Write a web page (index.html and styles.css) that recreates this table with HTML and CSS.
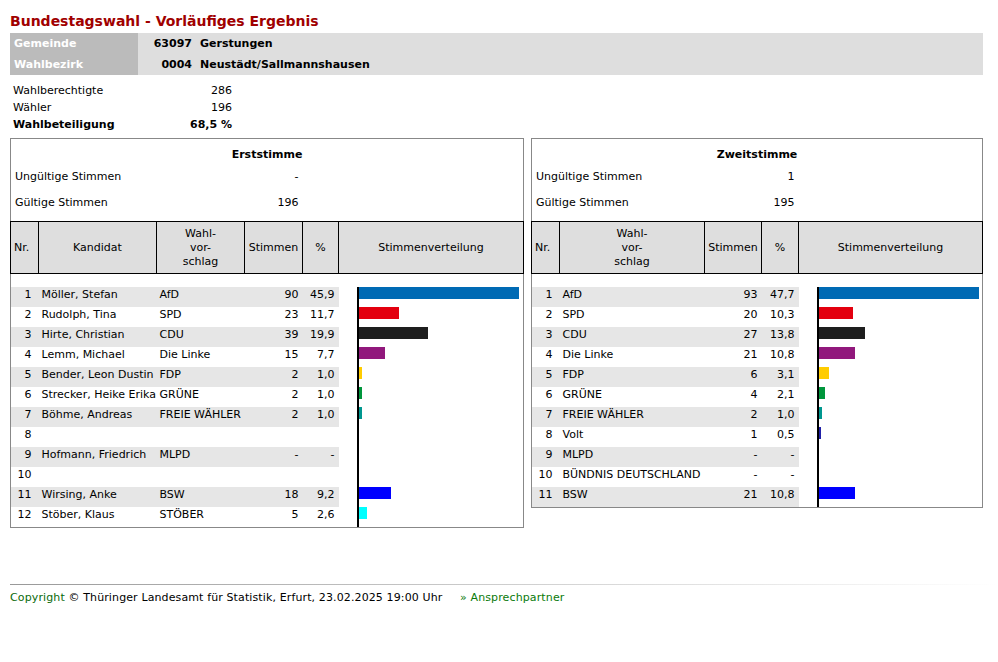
FILE: index.html
```html
<!DOCTYPE html>
<html lang="de">
<head>
<meta charset="utf-8">
<title>Bundestagswahl - Vorläufiges Ergebnis</title>
<link rel="stylesheet" href="styles.css">
</head>
<body>
<div class="page">
  <h1 class="title">Bundestagswahl - Vorläufiges Ergebnis</h1>

  <table class="info">
    <tr><th class="lbl">Gemeinde</th><td class="num">63097</td><td class="name">Gerstungen</td></tr>
    <tr><th class="lbl">Wahlbezirk</th><td class="num">0004</td><td class="name">Neustädt/Sallmannshausen</td></tr>
  </table>

  <table class="stats">
    <tr><td class="sl">Wahlberechtigte</td><td class="sv">286</td></tr>
    <tr><td class="sl">Wähler</td><td class="sv">196</td></tr>
    <tr class="strong"><td class="sl">Wahlbeteiligung</td><td class="sv">68,5 %</td></tr>
  </table>

  <div class="boxes">
    <table class="res res-erst">
      <colgroup>
        <col class="w-nr"><col class="w-kand"><col class="w-wv"><col class="w-st"><col class="w-pc"><col class="w-sv">
      </colgroup>
      <tr class="cap"><td colspan="6">Erststimme</td></tr>
      <tr class="sum"><td colspan="3" class="sum-l">Ungültige Stimmen</td><td class="r">-</td><td colspan="2"></td></tr>
      <tr class="sum sum-last"><td colspan="3" class="sum-l">Gültige Stimmen</td><td class="r">196</td><td colspan="2"></td></tr>
      <tr class="head">
        <th class="h-nr">Nr.</th>
        <th>Kandidat</th>
        <th>Wahl-<br>vor-<br>schlag</th>
        <th>Stimmen</th>
        <th>%</th>
        <th>Stimmenverteilung</th>
      </tr>
      <tr class="gap"><td colspan="6"></td></tr>
      <tr class="row odd"><td class="nr">1</td><td class="txt">Möller, Stefan</td><td class="txt">AfD</td><td class="r">90</td><td class="r">45,9</td><td class="bar"><div class="axis"><div class="b c-afd" style="width:160px"></div></div></td></tr>
      <tr class="row"><td class="nr">2</td><td class="txt">Rudolph, Tina</td><td class="txt">SPD</td><td class="r">23</td><td class="r">11,7</td><td class="bar"><div class="axis"><div class="b c-spd" style="width:40px"></div></div></td></tr>
      <tr class="row odd"><td class="nr">3</td><td class="txt">Hirte, Christian</td><td class="txt">CDU</td><td class="r">39</td><td class="r">19,9</td><td class="bar"><div class="axis"><div class="b c-cdu" style="width:69px"></div></div></td></tr>
      <tr class="row"><td class="nr">4</td><td class="txt">Lemm, Michael</td><td class="txt">Die Linke</td><td class="r">15</td><td class="r">7,7</td><td class="bar"><div class="axis"><div class="b c-linke" style="width:26px"></div></div></td></tr>
      <tr class="row odd"><td class="nr">5</td><td class="txt">Bender, Leon Dustin</td><td class="txt">FDP</td><td class="r">2</td><td class="r">1,0</td><td class="bar"><div class="axis"><div class="b c-fdp" style="width:3px"></div></div></td></tr>
      <tr class="row"><td class="nr">6</td><td class="txt">Strecker, Heike Erika</td><td class="txt">GRÜNE</td><td class="r">2</td><td class="r">1,0</td><td class="bar"><div class="axis"><div class="b c-gruene" style="width:3px"></div></div></td></tr>
      <tr class="row odd"><td class="nr">7</td><td class="txt">Böhme, Andreas</td><td class="txt">FREIE WÄHLER</td><td class="r">2</td><td class="r">1,0</td><td class="bar"><div class="axis"><div class="b c-fw" style="width:3px"></div></div></td></tr>
      <tr class="row"><td class="nr">8</td><td class="txt"></td><td class="txt"></td><td class="r"></td><td class="r"></td><td class="bar"><div class="axis"></div></td></tr>
      <tr class="row odd"><td class="nr">9</td><td class="txt">Hofmann, Friedrich</td><td class="txt">MLPD</td><td class="r">-</td><td class="r">-</td><td class="bar"><div class="axis"></div></td></tr>
      <tr class="row"><td class="nr">10</td><td class="txt"></td><td class="txt"></td><td class="r"></td><td class="r"></td><td class="bar"><div class="axis"></div></td></tr>
      <tr class="row odd"><td class="nr">11</td><td class="txt">Wirsing, Anke</td><td class="txt">BSW</td><td class="r">18</td><td class="r">9,2</td><td class="bar"><div class="axis"><div class="b c-bsw" style="width:32px"></div></div></td></tr>
      <tr class="row"><td class="nr">12</td><td class="txt">Stöber, Klaus</td><td class="txt">STÖBER</td><td class="r">5</td><td class="r">2,6</td><td class="bar"><div class="axis"><div class="b c-stoeber" style="width:8px"></div></div></td></tr>
    </table>

    <table class="res res-zweit">
      <colgroup>
        <col class="w-nr"><col class="w-wv2"><col class="w-st2"><col class="w-pc2"><col class="w-sv2">
      </colgroup>
      <tr class="cap"><td colspan="5">Zweitstimme</td></tr>
      <tr class="sum"><td colspan="3" class="sum-l">Ungültige Stimmen</td><td class="r">1</td><td></td></tr>
      <tr class="sum sum-last"><td colspan="3" class="sum-l">Gültige Stimmen</td><td class="r">195</td><td></td></tr>
      <tr class="head">
        <th class="h-nr">Nr.</th>
        <th>Wahl-<br>vor-<br>schlag</th>
        <th>Stimmen</th>
        <th>%</th>
        <th>Stimmenverteilung</th>
      </tr>
      <tr class="gap"><td colspan="5"></td></tr>
      <tr class="row odd"><td class="nr">1</td><td class="txt">AfD</td><td class="r">93</td><td class="r">47,7</td><td class="bar"><div class="axis"><div class="b c-afd" style="width:160px"></div></div></td></tr>
      <tr class="row"><td class="nr">2</td><td class="txt">SPD</td><td class="r">20</td><td class="r">10,3</td><td class="bar"><div class="axis"><div class="b c-spd" style="width:34px"></div></div></td></tr>
      <tr class="row odd"><td class="nr">3</td><td class="txt">CDU</td><td class="r">27</td><td class="r">13,8</td><td class="bar"><div class="axis"><div class="b c-cdu" style="width:46px"></div></div></td></tr>
      <tr class="row"><td class="nr">4</td><td class="txt">Die Linke</td><td class="r">21</td><td class="r">10,8</td><td class="bar"><div class="axis"><div class="b c-linke" style="width:36px"></div></div></td></tr>
      <tr class="row odd"><td class="nr">5</td><td class="txt">FDP</td><td class="r">6</td><td class="r">3,1</td><td class="bar"><div class="axis"><div class="b c-fdp" style="width:10px"></div></div></td></tr>
      <tr class="row"><td class="nr">6</td><td class="txt">GRÜNE</td><td class="r">4</td><td class="r">2,1</td><td class="bar"><div class="axis"><div class="b c-gruene" style="width:6px"></div></div></td></tr>
      <tr class="row odd"><td class="nr">7</td><td class="txt">FREIE WÄHLER</td><td class="r">2</td><td class="r">1,0</td><td class="bar"><div class="axis"><div class="b c-fw" style="width:3px"></div></div></td></tr>
      <tr class="row"><td class="nr">8</td><td class="txt">Volt</td><td class="r">1</td><td class="r">0,5</td><td class="bar"><div class="axis"><div class="b c-volt" style="width:2px"></div></div></td></tr>
      <tr class="row odd"><td class="nr">9</td><td class="txt">MLPD</td><td class="r">-</td><td class="r">-</td><td class="bar"><div class="axis"></div></td></tr>
      <tr class="row"><td class="nr">10</td><td class="txt">BÜNDNIS DEUTSCHLAND</td><td class="r">-</td><td class="r">-</td><td class="bar"><div class="axis"></div></td></tr>
      <tr class="row odd"><td class="nr">11</td><td class="txt">BSW</td><td class="r">21</td><td class="r">10,8</td><td class="bar"><div class="axis"><div class="b c-bsw" style="width:36px"></div></div></td></tr>
    </table>
  </div>

  <div class="footer">
    <div class="rule"></div>
    <p class="foot-text"><span class="green">Copyright</span> © Thüringer Landesamt für Statistik, Erfurt, 23.02.2025 19:00 Uhr <a class="contact" href="#">» Ansprechpartner</a></p>
  </div>
</div>
</body>
</html>
```

FILE: styles.css
```css
html, body {
  margin: 0;
  padding: 0;
  background: #fff;
}

body {
  font-family: "DejaVu Sans", Verdana, sans-serif;
  font-size: 11px;
  color: #000;
}

.page {
  width: 973px;
  margin-left: 10px;
  padding-top: 12px;
}

.title {
  margin: 0 0 3px 0;
  font-size: 14px;
  line-height: 18px;
  font-weight: bold;
  color: #a00000;
}

/* Gemeinde / Wahlbezirk band */
.info {
  width: 973px;
  border-collapse: collapse;
  background: #dedede;
}
.info th, .info td {
  padding: 0;
  height: 21px;
  line-height: 21px;
  font-weight: bold;
  white-space: nowrap;
}
.info .lbl {
  width: 124px;
  padding-left: 4px;
  text-align: left;
  background: #bbbbbb;
  color: #fff;
}
.info .num {
  width: 54px;
  padding-right: 4px;
  text-align: right;
}
.info .name {
  padding-left: 4px;
  text-align: left;
}

/* Wahlberechtigte etc. */
.stats {
  margin-top: 7px;
  border-collapse: collapse;
}
.stats td {
  padding: 0;
  height: 17px;
  line-height: 17px;
  white-space: nowrap;
}
.stats .sl {
  width: 147px;
  padding-left: 3px;
}
.stats .sv {
  width: 72px;
  padding-right: 3px;
  text-align: right;
}
.stats .strong td {
  font-weight: bold;
}

/* Result boxes */
.boxes {
  display: flex;
  align-items: flex-start;
  gap: 7px;
  margin-top: 5px;
}

.res {
  border-collapse: collapse;
  table-layout: fixed;
  border: 1px solid #888;
}
.res-erst { width: 513px; }
.res-zweit { width: 451px; }

.w-nr { width: 28px; }
.w-kand { width: 118px; }
.w-wv { width: 88px; }
.w-st { width: 58px; }
.w-pc { width: 36px; }
.w-sv { width: 185px; }

.w-wv2 { width: 145px; }
.w-st2 { width: 57px; }
.w-pc2 { width: 37px; }
.w-sv2 { width: 184px; }

.res td, .res th {
  padding: 0;
  white-space: nowrap;
}

.cap td {
  padding: 9px 0 3px 0;
  line-height: 13px;
  text-align: center;
  font-weight: bold;
}

.sum td {
  line-height: 26px;
}
.sum-last td {
  padding-bottom: 5px;
}
.sum .sum-l {
  padding-left: 4px;
}
.res .r {
  text-align: right;
  padding-right: 4px;
}

.head th {
  border: 1px solid #000;
  background: #dedede;
  font-weight: normal;
  text-align: center;
  vertical-align: middle;
  line-height: 14px;
  padding: 5px 0 4px 0;
}
.head .h-nr {
  text-align: left;
  padding-left: 3px;
}

.gap td {
  height: 13px;
}

.row td {
  vertical-align: top;
  line-height: 15px;
}
.row.odd td {
  background: #e6e6e6;
}
.row.odd td.bar {
  background: #fff;
}
.row .nr {
  text-align: right;
  padding-right: 7px;
}
.row .txt {
  padding-left: 3px;
  overflow: visible;
}
.row .bar {
  padding-left: 18px;
}

.axis {
  height: 20px;
  border-left: 2px solid #000;
}
.b {
  height: 12px;
}

.c-afd { background: #006ab4; }
.c-spd { background: #e3000f; }
.c-cdu { background: #1e1e1e; }
.c-linke { background: #91187c; }
.c-fdp { background: #ffcc00; }
.c-gruene { background: #00963c; }
.c-fw { background: #00978f; }
.c-volt { background: #2020a8; }
.c-bsw { background: #0000ff; }
.c-stoeber { background: #00ffff; }

/* Footer */
.footer {
  width: 988px;
  margin-top: 56px;
}
.rule {
  height: 1px;
  background: linear-gradient(to right, #999999, #d8d8d8 60%, #ffffff);
}
.foot-text {
  margin: 5px 0 0 0;
  line-height: 15px;
  letter-spacing: 0.12px;
}
.green {
  color: #0a6a0a;
}
.contact {
  margin-left: 14px;
  color: #0a7a0a;
  text-decoration: none;
}
```
